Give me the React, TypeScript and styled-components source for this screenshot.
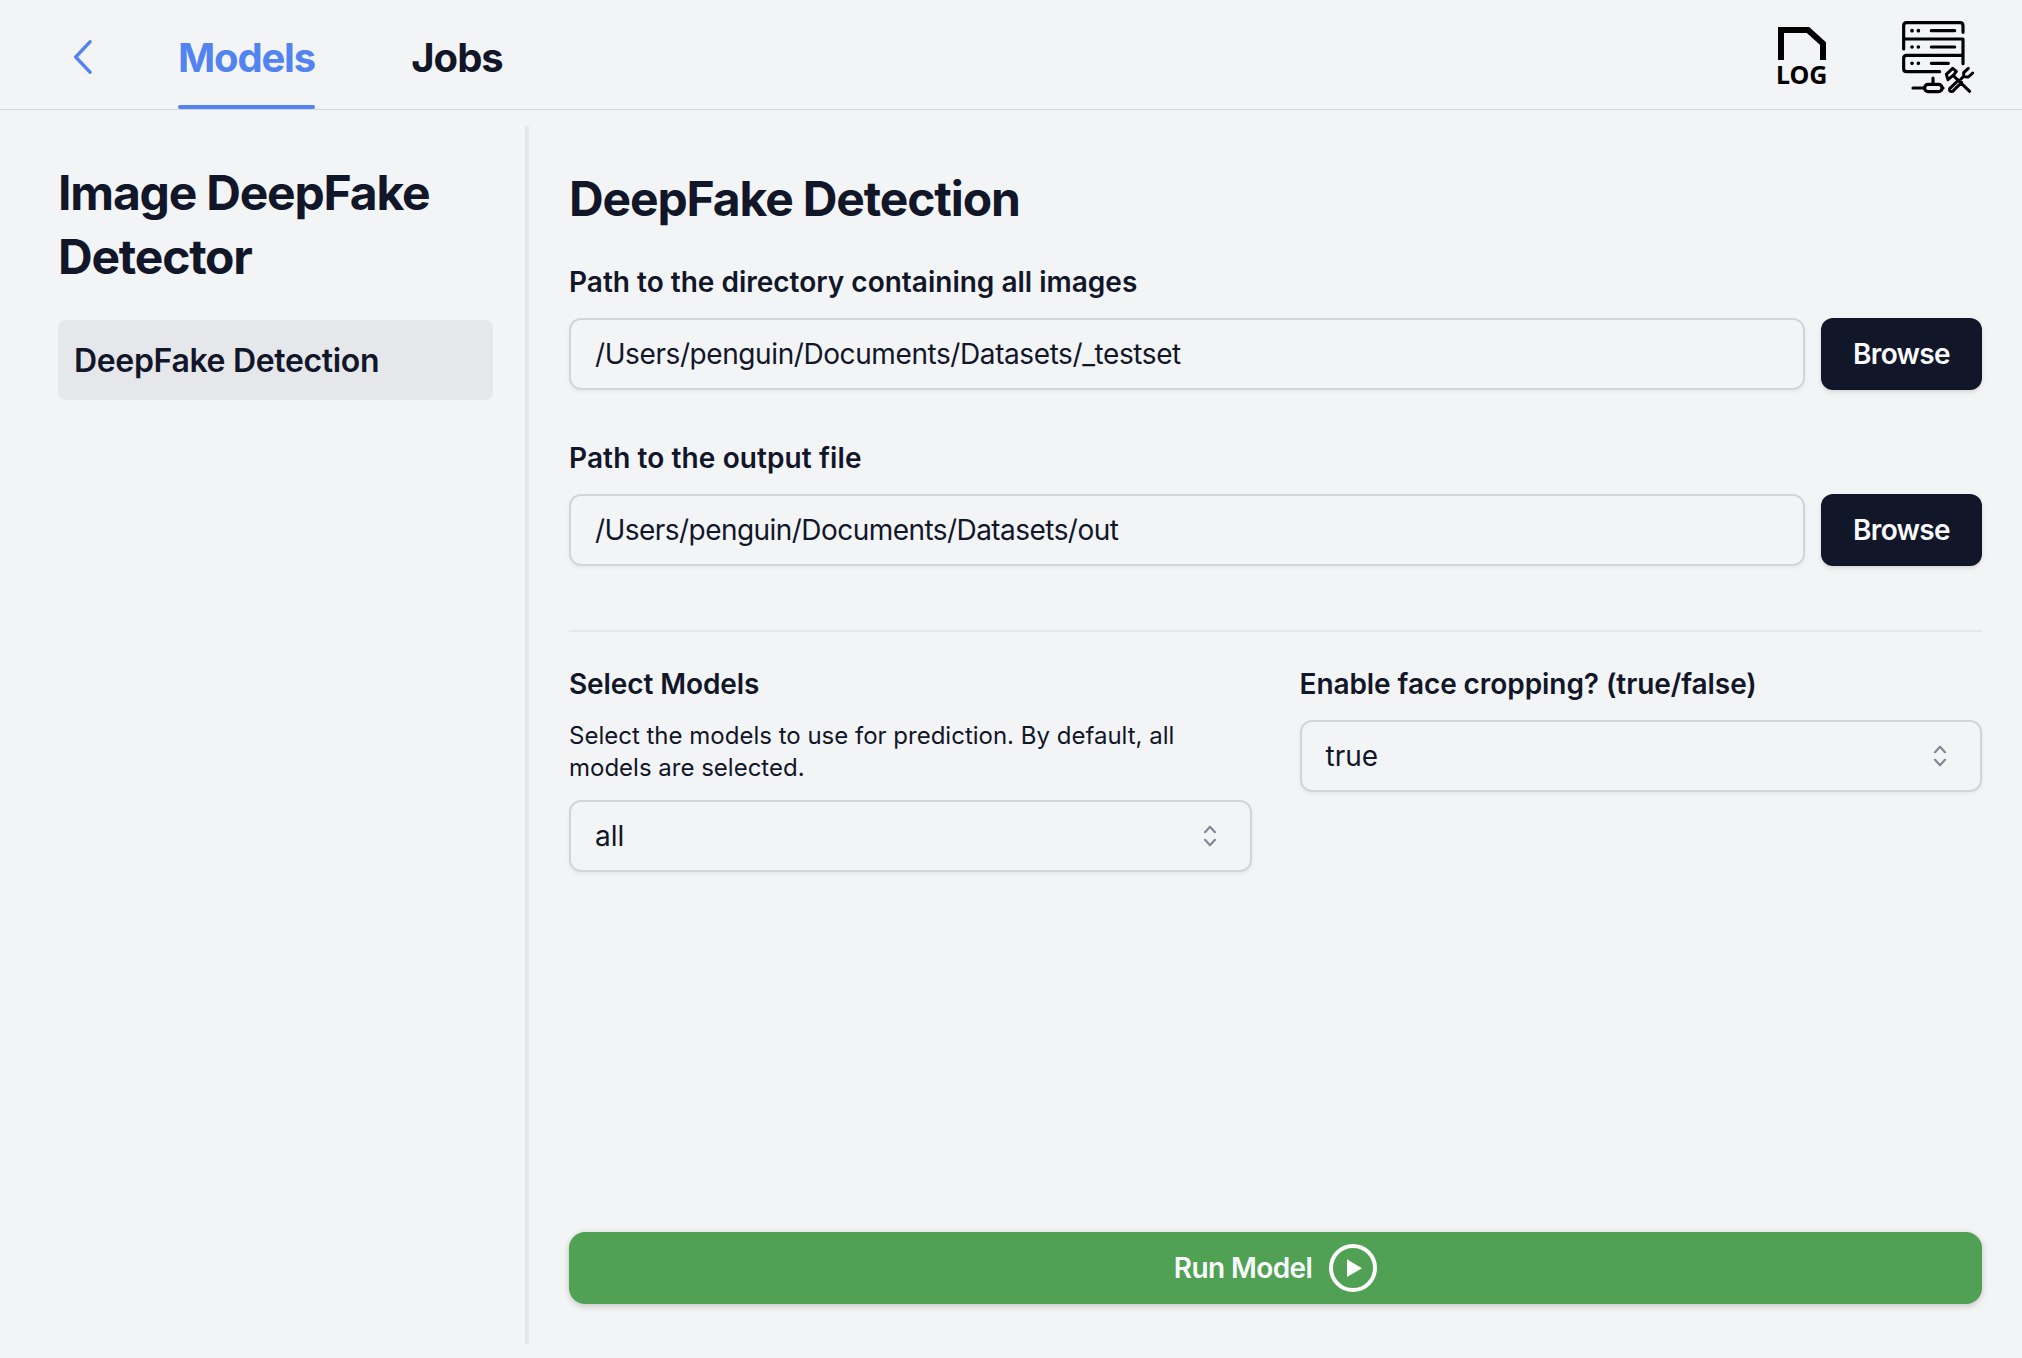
import React from "react";
import styled, { createGlobalStyle } from "styled-components";

const ink = "#111629";
const accent = "#5283f0";

const GlobalStyle = createGlobalStyle`
  *, *::before, *::after { box-sizing: border-box; }
  body {
    margin: 0;
    background: #f3f4f6;
    color: ${ink};
    font-family: Inter, "Liberation Sans", sans-serif;
  }
  button { font-family: inherit; border: 0; background: none; padding: 0; cursor: pointer; }
`;

const Page = styled.div`
  display: flex;
  flex-direction: column;
  height: 1358px;
  overflow: hidden;
`;

const Header = styled.header`
  display: flex;
  align-items: stretch;
  height: 110px;
  flex: none;
  padding: 0 47px 0 74px;
  border-bottom: 1px solid #d1d5db;
`;

const BackButton = styled.button`
  display: flex;
  align-items: center;
  width: 104px;
  padding-top: 5px;
`;

const Tab = styled.button<{ $active?: boolean; $width: number }>`
  display: flex;
  flex-direction: column;
  justify-content: space-between;
  width: ${(p) => p.$width}px;
  margin-right: 96px;
  padding-top: 30px;
  color: ${(p) => (p.$active ? accent : ink)};
  font-size: 40px;
  font-weight: 700;
  line-height: 56px;
  letter-spacing: ${(p) => (p.$active ? -1.2 : -1)}px;
  white-space: nowrap;
`;

const TabBar = styled.span`
  width: 100%;
  height: 4px;
  border-radius: 2px;
  background: ${accent};
`;

const Tools = styled.div`
  display: flex;
  align-items: flex-start;
  gap: 70px;
  margin-left: auto;
  padding-top: 20px;
`;

const Body = styled.div`
  display: flex;
  flex: 1;
  padding: 16px 40px 14px 58px;
`;

const Sidebar = styled.aside`
  width: 471px;
  padding: 35px 32px 0 0;
  border-right: 4px solid #e2e8ee;
`;

const SidebarTitle = styled.h1`
  margin: 0 0 31px;
  font-size: 48px;
  font-weight: 700;
  line-height: 64px;
  letter-spacing: -1.2px;
`;

const SidebarItem = styled.button`
  display: block;
  width: 100%;
  height: 80px;
  padding: 0 16px;
  border-radius: 8px;
  background: #e5e7eb;
  color: ${ink};
  font-size: 32px;
  font-weight: 600;
  letter-spacing: -0.34px;
  text-align: left;
`;

const Main = styled.main`
  display: flex;
  flex-direction: column;
  flex: 1;
  padding: 41px 0 40px 40px;
`;

const Title = styled.h2`
  margin: 0 0 31px;
  font-size: 48px;
  font-weight: 700;
  line-height: 64px;
  letter-spacing: -1.14px;
`;

const Label = styled.label<{ $tracking?: number }>`
  display: block;
  font-size: 28px;
  font-weight: 600;
  line-height: 40px;
  letter-spacing: ${(p) => p.$tracking ?? 0}px;
`;

const Fields = styled.div`
  display: flex;
  flex-direction: column;
  gap: 48px;
  margin-bottom: 64px;
`;

const FieldRow = styled.div`
  display: flex;
  gap: 16px;
  margin-top: 16px;
`;

const Box = styled.div<{ $tracking?: number }>`
  display: flex;
  flex: 1;
  align-items: center;
  height: 72px;
  padding: 0 33px 0 24px;
  border: 2px solid #d1d5db;
  border-radius: 12px;
  box-shadow: 0 2px 4px rgba(0, 0, 0, 0.05);
  font-size: 28px;
  letter-spacing: ${(p) => p.$tracking ?? 0}px;
`;

const BrowseButton = styled.button`
  width: 161px;
  height: 72px;
  border-radius: 12px;
  background: ${ink};
  box-shadow: 0 2px 4px rgba(0, 0, 0, 0.12);
  color: #f8fafc;
  font-size: 28px;
  font-weight: 600;
  letter-spacing: -0.7px;
`;

const Divider = styled.hr`
  width: 100%;
  height: 2px;
  margin: 0 0 32px;
  border: 0;
  background: #e2e8ee;
`;

const Columns = styled.div`
  display: grid;
  grid-template-columns: 1fr 1fr;
  gap: 48px;
`;

const Hint = styled.p`
  margin: 16px 0;
  font-size: 24px;
  line-height: 32px;
`;

const Select = styled(Box)`
  justify-content: space-between;
`;

const SelectWrap = styled.div`
  margin-top: 16px;
`;

const RunButton = styled.button`
  display: flex;
  align-items: center;
  justify-content: center;
  gap: 17px;
  height: 72px;
  margin-top: auto;
  border-radius: 16px;
  background: #51a155;
  box-shadow: 0 2px 6px rgba(0, 0, 0, 0.2);
  color: #f8fafc;
  font-size: 28px;
  font-weight: 600;
  letter-spacing: -0.6px;
`;

const BackIcon = () => (
  <svg width="18" height="34" viewBox="0 0 18 34" fill="none" stroke={accent} strokeWidth="3.4" strokeLinecap="round" strokeLinejoin="round">
    <path d="M16 1.8 1.7 17 16 32.2" />
  </svg>
);

const LogIcon = () => (
  <svg width="54" height="76" viewBox="0 0 54 76">
    <path d="M5 40V10h27L47 23.5V40" fill="none" stroke="#000" strokeWidth="6" />
    <text x="0" y="63.5" fontFamily="Noto Sans" fontWeight="700" fontSize="25" textLength="51.5" lengthAdjust="spacingAndGlyphs">LOG</text>
  </svg>
);

const ServerIcon = () => (
  <svg width="75" height="74" viewBox="480 60 225 222" fill="none" stroke="#000" strokeWidth="9.5" strokeLinecap="round" strokeLinejoin="round">
    <path d="M491 147V77q0-9 9-9h160q9 0 9 9v20M491 117h178v74M669 166H500q-9 0-9 9v31q0 9 9 9h99" />
    <path d="M574 92h70M574 141h70M574 190h51" />
    <path d="M516 92h.1M535 92h.1M516 141h.1M535 141h.1M516 190h.1M535 190h.1" strokeWidth="11" />
    <path d="M579 234v16M519 264h34M607 264h2" />
    <rect x="554" y="253" width="52" height="22" rx="10" />
    <path d="m619 223 19-18 11 9-7 10-18 15zM641 228l48 46M656 240l-27 26q-2 11 9 8l27-27M685 205l-14 13v11l-8 8M698 219l-13 12-10-1" strokeWidth="9" />
  </svg>
);

const UpDownIcon = () => (
  <svg width="14" height="22" viewBox="0 0 14 22" fill="none" stroke="#858997" strokeWidth="2.2" strokeLinecap="round" strokeLinejoin="round">
    <path d="m2 7.2 5-5.5 5 5.5M2 14.8l5 5.5 5-5.5" />
  </svg>
);

const PlayIcon = () => (
  <svg width="48" height="48" viewBox="0 0 48 48">
    <circle cx="24" cy="24" r="22" fill="none" stroke="#fff" strokeWidth="4" />
    <path d="M18 15.3v17.8l15-8.9z" fill="#fff" />
  </svg>
);

interface PathFieldProps {
  label: string;
  value: string;
  tracking: number;
  labelTracking?: number;
}

function PathField({ label, value, tracking, labelTracking }: PathFieldProps) {
  return (
    <div>
      <Label $tracking={labelTracking}>{label}</Label>
      <FieldRow>
        <Box $tracking={tracking}>{value}</Box>
        <BrowseButton>Browse</BrowseButton>
      </FieldRow>
    </div>
  );
}

export default function App() {
  return (
    <Page>
      <GlobalStyle />
      <Header>
        <BackButton aria-label="Back"><BackIcon /></BackButton>
        <Tab $active $width={137}>Models<TabBar /></Tab>
        <Tab $width={92}>Jobs</Tab>
        <Tools><LogIcon /><ServerIcon /></Tools>
      </Header>
      <Body>
        <Sidebar>
          <SidebarTitle>Image DeepFake Detector</SidebarTitle>
          <SidebarItem>DeepFake Detection</SidebarItem>
        </Sidebar>
        <Main>
          <Title>DeepFake Detection</Title>
          <Fields>
            <PathField label="Path to the directory containing all images" value="/Users/penguin/Documents/Datasets/_testset" tracking={-0.41} />
            <PathField label="Path to the output file" value="/Users/penguin/Documents/Datasets/out" tracking={-0.55} labelTracking={0.1} />
          </Fields>
          <Divider />
          <Columns>
            <div>
              <Label $tracking={-0.1}>Select Models</Label>
              <Hint>Select the models to use for prediction. By default, all models are selected.</Hint>
              <Select>all<UpDownIcon /></Select>
            </div>
            <div>
              <Label $tracking={-0.07}>Enable face cropping? (true/false)</Label>
              <SelectWrap><Select>true<UpDownIcon /></Select></SelectWrap>
            </div>
          </Columns>
          <RunButton>Run Model<PlayIcon /></RunButton>
        </Main>
      </Body>
    </Page>
  );
}
